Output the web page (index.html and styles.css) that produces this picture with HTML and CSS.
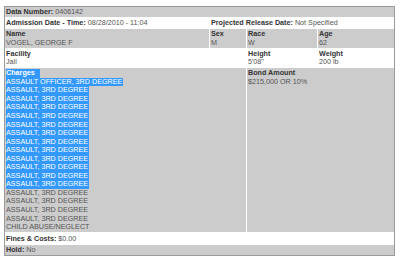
FILE: index.html
```html
<!DOCTYPE html>
<html>
<head>
<meta charset="utf-8">
<link rel="stylesheet" href="styles.css">
</head>
<body>
<div class="record">
  <div class="cell gray span4"><b>Data Number:</b> 0406142</div>
  <div class="cell"><b>Admission Date - Time:</b> 08/28/2010 - 11:04</div>
  <div class="cell span3"><b>Projected Release Date:</b> Not Specified</div>
  <div class="cell gray"><b>Name</b><br>VOGEL, GEORGE F</div>
  <div class="cell gray"><b>Sex</b><br>M</div>
  <div class="cell gray"><b>Race</b><br>W</div>
  <div class="cell gray"><b>Age</b><br>62</div>
  <div class="cell span2"><b>Facility</b><br>Jail</div>
  <div class="cell"><b>Height</b><br>5'08"</div>
  <div class="cell"><b>Weight</b><br>200 lb</div>
  <div class="cell gray span2 charges">
    <div class="line"><span class="sel label-sel"><b>Charges</b></span></div>
    <div class="line"><span class="sel">ASSAULT OFFICER, 3RD DEGREE</span></div>
    <div class="line"><span class="sel">ASSAULT, 3RD DEGREE</span></div>
    <div class="line"><span class="sel">ASSAULT, 3RD DEGREE</span></div>
    <div class="line"><span class="sel">ASSAULT, 3RD DEGREE</span></div>
    <div class="line"><span class="sel">ASSAULT, 3RD DEGREE</span></div>
    <div class="line"><span class="sel">ASSAULT, 3RD DEGREE</span></div>
    <div class="line"><span class="sel">ASSAULT, 3RD DEGREE</span></div>
    <div class="line"><span class="sel">ASSAULT, 3RD DEGREE</span></div>
    <div class="line"><span class="sel">ASSAULT, 3RD DEGREE</span></div>
    <div class="line"><span class="sel">ASSAULT, 3RD DEGREE</span></div>
    <div class="line"><span class="sel">ASSAULT, 3RD DEGREE</span></div>
    <div class="line"><span class="sel">ASSAULT, 3RD DEGREE</span></div>
    <div class="line"><span class="sel">ASSAULT, 3RD DEGREE</span></div>
    <div class="line">ASSAULT, 3RD DEGREE</div>
    <div class="line">ASSAULT, 3RD DEGREE</div>
    <div class="line">ASSAULT, 3RD DEGREE</div>
    <div class="line">ASSAULT, 3RD DEGREE</div>
    <div class="line">CHILD ABUSE/NEGLECT</div>
  </div>
  <div class="cell gray span2"><b>Bond Amount</b><br>$215,000 OR 10%</div>
  <div class="cell span4 fines"><b>Fines &amp; Costs:</b> $0.00</div>
  <div class="cell gray span4"><b>Hold:</b> No</div>
</div>
</body>
</html>
```
FILE: styles.css
```css
html, body {
  margin: 0;
  padding: 0;
  background: #fff;
}
body {
  padding: 6px 0 0 4px;
  font-family: "Liberation Sans", Arial, sans-serif;
  font-size: 7.2px;
  line-height: 8.55px;
  color: #555;
}
.record {
  width: 389px;
  border: 1px solid #9a9a9a;
  background: #fff;
  display: grid;
  grid-template-columns: 204px 36px 70px 76px;
  gap: 1px;
  align-items: stretch;
}
.cell {
  padding: 1px 1px 0.5px 1px;
}
.cell b {
  color: #333;
  font-weight: bold;
}
.gray {
  background: #cccccc;
}
.span2 { grid-column: span 2; }
.span3 { grid-column: span 3; }
.span4 { grid-column: span 4; }
.fines {
  padding-top: 1.5px;
  padding-bottom: 1px;
}
.line {
  height: 8.55px;
  white-space: nowrap;
}
.sel {
  display: inline-block;
  background: #3399ff;
  color: #fff;
  padding-right: 1px;
}
.sel b {
  color: #fff;
}
.label-sel {
  padding-right: 5px;
}
```
